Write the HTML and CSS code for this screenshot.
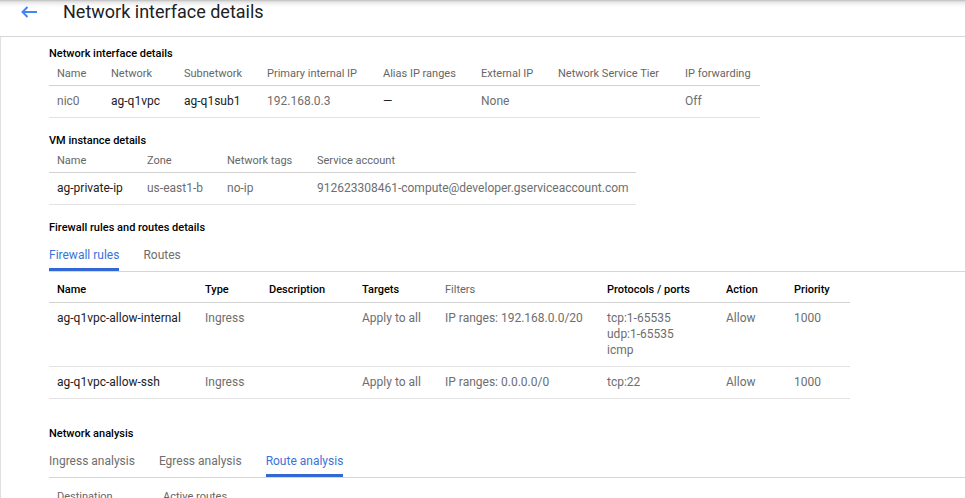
FILE: index.html
```html
<!DOCTYPE html>
<html lang="en">
<head>
<meta charset="utf-8">
<title>Network interface details</title>
<link rel="stylesheet" href="styles.css">
</head>
<body>
<header class="topbar">
  <a class="back" href="#" aria-label="Back">
    <svg width="18" height="14" viewBox="0 0 18 14"><path d="M17 7H2.5M7.5 2L2.5 7l5 5" fill="none" stroke="#4285f4" stroke-width="2"/></svg>
  </a>
  <h1 class="title">Network interface details</h1>
</header>
<main class="content">
  <section class="section">
    <h2 class="heading">Network interface details</h2>
    <div class="tbl t-nic">
      <div class="row head">
        <div class="cell">Name</div><div class="cell">Network</div><div class="cell">Subnetwork</div><div class="cell">Primary internal IP</div><div class="cell">Alias IP ranges</div><div class="cell">External IP</div><div class="cell">Network Service Tier</div><div class="cell">IP forwarding</div>
      </div>
      <div class="row">
        <div class="cell muted">nic0</div><div class="cell">ag-q1vpc</div><div class="cell">ag-q1sub1</div><div class="cell muted">192.168.0.3</div><div class="cell">—</div><div class="cell muted">None</div><div class="cell"></div><div class="cell muted">Off</div>
      </div>
    </div>
  </section>

  <section class="section">
    <h2 class="heading">VM instance details</h2>
    <div class="tbl t-vm">
      <div class="row head">
        <div class="cell">Name</div><div class="cell">Zone</div><div class="cell">Network tags</div><div class="cell">Service account</div>
      </div>
      <div class="row">
        <div class="cell">ag-private-ip</div><div class="cell muted">us-east1-b</div><div class="cell muted">no-ip</div><div class="cell muted">912623308461-compute@developer.gserviceaccount.com</div>
      </div>
    </div>
  </section>

  <section class="section">
    <h2 class="heading">Firewall rules and routes details</h2>
    <nav class="tabs">
      <span class="tab active">Firewall rules</span>
      <span class="tab">Routes</span>
    </nav>
    <div class="tbl t-fw">
      <div class="row head strong">
        <div class="cell">Name</div><div class="cell">Type</div><div class="cell">Description</div><div class="cell">Targets</div><div class="cell plain">Filters</div><div class="cell">Protocols / ports</div><div class="cell">Action</div><div class="cell">Priority</div>
      </div>
      <div class="row">
        <div class="cell">ag-q1vpc-allow-internal</div><div class="cell muted">Ingress</div><div class="cell"></div><div class="cell muted">Apply to all</div><div class="cell muted">IP ranges: 192.168.0.0/20</div><div class="cell muted">tcp:1-65535<br>udp:1-65535<br>icmp</div><div class="cell muted">Allow</div><div class="cell muted">1000</div>
      </div>
      <div class="row">
        <div class="cell">ag-q1vpc-allow-ssh</div><div class="cell muted">Ingress</div><div class="cell"></div><div class="cell muted">Apply to all</div><div class="cell muted">IP ranges: 0.0.0.0/0</div><div class="cell muted">tcp:22</div><div class="cell muted">Allow</div><div class="cell muted">1000</div>
      </div>
    </div>
  </section>

  <section class="section analysis">
    <h2 class="heading">Network analysis</h2>
    <nav class="tabs">
      <span class="tab">Ingress analysis</span>
      <span class="tab">Egress analysis</span>
      <span class="tab active">Route analysis</span>
    </nav>
    <div class="tbl t-route">
      <div class="row head">
        <div class="cell">Destination</div><div class="cell">Active routes</div>
      </div>
    </div>
  </section>
</main>
</body>
</html>
```
FILE: styles.css
```css
* { box-sizing: border-box; }
html, body { margin: 0; padding: 0; background: #fff; }
body {
  font-family: Roboto, "Liberation Sans", Arial, sans-serif;
  color: #202124;
  overflow: hidden;
  height: 498px;
}
.topbar {
  height: 37px;
  display: flex;
  align-items: center;
  border-bottom: 1px solid #d6d6d6;
  background: linear-gradient(to bottom, #bdbdbd 0px, #e6e6e6 2px, #f8f8f8 5px, #ffffff 8px);
  padding-left: 20px;
  padding-bottom: 12px;
}
.back { display: flex; width: 18px; height: 14px; }
.title {
  margin: 0 0 0 25px;
  font-size: 18px;
  font-weight: 400;
  line-height: 22px;
  color: #202124;
}
.content {
  border-left: 1px solid #e0e0e0;
  padding-left: 48px;
  height: 461px;
}
.section { padding-top: 9px; }
.section + .section { padding-top: 15px; }
.section.analysis { padding-top: 27px; }
.heading {
  margin: 0;
  font-size: 11px;
  font-weight: 500;
  line-height: 16px;
  color: #000;
}
.row {
  display: grid;
  border-bottom: 1px solid #e3e3e3;
  font-size: 12px;
  line-height: 16px;
  padding: 7px 0 8px;
}
.row.head {
  font-size: 11px;
  color: #666;
  padding: 4px 0 3px;
  border-bottom-color: #d2d2d2;
}
.row.head.strong { color: #000; font-weight: 500; padding: 10px 0 4px; }
.row.head.strong .plain { color: #666; font-weight: 400; }
.cell { padding-left: 8px; white-space: nowrap; }
.muted { color: #6e6e6e; }
.t-nic .row { grid-template-columns: 54px 73px 83px 116px 98px 77px 127px 83px; width: 711px; }
.t-vm .row { grid-template-columns: 90px 80px 90px 327px; width: 587px; }
.t-fw .row { grid-template-columns: 148px 64px 93px 83px 162px 119px 68px 64px; width: 801px; }
.t-route .row { grid-template-columns: 106px 200px; width: 801px; border-bottom: none; }
.t-route .row.head { padding-top: 11px; }
.tabs {
  display: flex;
  gap: 24px;
  border-bottom: 1px solid #d6d6d6;
}
.tab {
  font-size: 12px;
  line-height: 16px;
  padding-top: 11px;
  height: 35px;
  border-bottom: 3px solid transparent;
  color: #6e6e6e;
}
.tab.active { color: #3b73d8; border-bottom-color: #3367d6; }
```
